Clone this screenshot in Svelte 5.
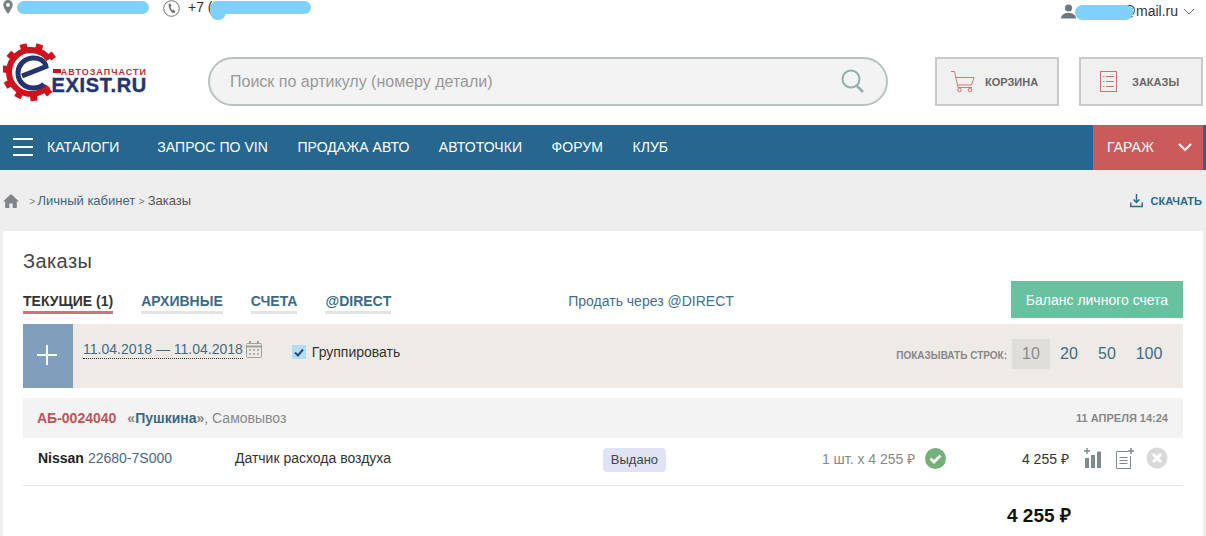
<script>
  const navItems = ['Запрос по VIN', 'Продажа авто', 'Автоточки', 'Форум', 'Клуб'];
  const tabs = ['Архивные', 'Счета', '@Direct'];
  const rowCounts = [20, 50, 100];
  const teeth = [50, 84, 118, 152, 186, 220, 254, 288, 322];
</script>

<div class="page">
  <div class="topbar">
    <div class="contacts">
      <span class="city">
        <svg width="10" height="14" viewBox="0 0 10 14"><path fill="#7b7f82" fill-rule="evenodd" d="M5 0a4.800 4.800 0 0 1 4.800 4.800C9.800 8 5 14 5 14S.2 8 .2 4.800A4.800 4.800 0 0 1 5 0zm0 3a1.900 1.900 0 1 0 0 3.800A1.900 1.900 0 0 0 5 3z"/></svg>
        <span class="blot city-blot"></span>
      </span>
      <span class="phone">
        <svg width="17" height="17" viewBox="0 0 17 17"><circle cx="8.500" cy="8.500" r="7.800" fill="none" stroke="#6d7174" stroke-width="1"/><path fill="#6d7174" d="M5.800 3.800l1.500-.4 1.200 2.500-1 .9c.2 1.300.9 2.600 1.900 3.500l1.200-.5 1.800 2-1.100 1.100c-1.300.5-2.800-.7-4-2.400-1.300-2-2.100-4.700-1.500-6.700z"/></svg>
        <span class="phone-num">+7 (9</span>
        <span class="blot phone-blot"></span>
        <span class="blot phone-drip"></span>
      </span>
    </div>
    <div class="user">
      <svg width="15" height="15" viewBox="0 0 15 15"><circle cx="7.500" cy="4" r="3.600" fill="#6d7880"/><path fill="#6d7880" d="M0 14.500c0-3.500 3-5.500 7.500-5.500s7.500 2 7.500 5.500z"/></svg>
      <span class="mail">post@mail.ru</span>
      <span class="blot user-blot"></span>
      <svg width="12" height="7" viewBox="0 0 12 7"><path d="M1 1l5 5 5-5" fill="none" stroke="#666" stroke-width="1"/></svg>
    </div>
  </div>

  <header class="header">
    <div class="logo">
      <svg class="gear" width="62" height="62" viewBox="0 0 62 62">
        {#each teeth as a}
          <rect x="51" y="26.500" width="6" height="7" fill="#d0121c" transform="rotate({a} 28 30)"/>
        {/each}
        <path d="M46 17.400A22 22 0 1 0 44.900 44.100" fill="none" stroke="#d0121c" stroke-width="6"/>
        <path d="M50 29h8" stroke="#d0121c" stroke-width="4"/>
        <path d="M19 34L43 24.500C42 18 35 15.500 29 16 20 17 15 24 15 31c0 9 7 15 15 15 4 0 8-1 11-4" fill="none" stroke="#24346f" stroke-width="5"/>
      </svg>
      <div class="logo-text">
        <span class="logo-small">автозапчасти</span>
        <span class="logo-big">EXIST.RU</span>
      </div>
    </div>

    <div class="search">
      <span>Поиск по артикулу (номеру детали)</span>
      <svg width="24" height="25" viewBox="0 0 24 25"><circle cx="10" cy="10" r="8.500" fill="none" stroke="#8fb0b0" stroke-width="2"/><path d="M15.500 16.500l6.500 6.500" stroke="#8fb0b0" stroke-width="2.500"/></svg>
    </div>

    <div class="hbtn">
      <svg width="24" height="22" viewBox="0 0 24 22" fill="none" stroke="#cf7b74" stroke-width="1"><path d="M0 .5h3.500L7 16.500h14"/><path d="M4.500 6.500h18.500l-2.500 7.500H7"/><circle cx="8.500" cy="19" r="1.800"/><circle cx="19" cy="19" r="1.800"/></svg>
      <span>Корзина</span>
    </div>
    <div class="hbtn orders">
      <svg width="17" height="21" viewBox="0 0 17 21" fill="none" stroke="#c4766f" stroke-width="1"><rect x=".5" y=".5" width="16" height="20"/><path d="M3 5.500h1.500M6 5.500h8M3 10.500h1.500M6 10.500h8M3 15.500h1.500M6 15.500h8"/></svg>
      <span>Заказы</span>
    </div>
  </header>

  <nav class="nav">
    <div class="catalog">
      <span class="burger"><i></i><i></i><i></i></span>
      <span>Каталоги</span>
    </div>
    <div class="nav-links">
      {#each navItems as item}
        <span>{item}</span>
      {/each}
    </div>
    <div class="garage">
      <span>Гараж</span>
      <svg width="14" height="8" viewBox="0 0 14 8"><path d="M1 1l6 6 6-6" fill="none" stroke="#fff" stroke-width="2"/></svg>
    </div>
  </nav>

  <div class="crumbs">
    <div class="crumb-path">
      <svg width="16" height="14" viewBox="0 0 16 14"><path fill="#7f8589" d="M8 0l8 7.500h-2.200V14H9.700V9.500H6.300V14H2.200V7.500H0z"/></svg>
      <span class="sep first">&gt;</span>
      <span class="crumb-link">Личный кабинет</span>
      <span class="sep">&gt;</span>
      <span class="crumb-here">Заказы</span>
    </div>
    <div class="download">
      <svg width="13" height="14" viewBox="0 0 13 14"><path d="M6.500 0v8M3.500 5.500l3 3 3-3M.8 8.500v4h11.400v-4" fill="none" stroke="#2b6a92" stroke-width="1.500"/></svg>
      <span>Скачать</span>
    </div>
  </div>

  <main class="card">
    <h1>Заказы</h1>

    <div class="tabs-row">
      <div class="tabs">
        <span class="tab active">Текущие (1)</span>
        {#each tabs as tab}
          <span class="tab">{tab}</span>
        {/each}
      </div>
      <span class="sell">Продать через @DIRECT</span>
      <span class="balance">Баланс личного счета</span>
    </div>

    <div class="toolbar">
      <div class="plus"><i></i><i></i></div>
      <div class="dates">
        <span>11.04.2018 — 11.04.2018</span>
        <svg width="16" height="17" viewBox="0 0 16 17" fill="none" stroke="#a3a09b"><rect x=".5" y="2.500" width="15" height="14" rx="1"/><path d="M.5 5.500h15" stroke-width="2"/><path d="M4 0v3M12 0v3" stroke-width="2"/><path d="M3 9h2M7 9h2M11 9h2M3 13h2M7 13h2M11 13h2" stroke-width="1.500"/></svg>
      </div>
      <label class="group">
        <span class="check"><svg width="10" height="9" viewBox="0 0 10 9"><path d="M1 4.500l3 3 5-6" fill="none" stroke="#1e4e7c" stroke-width="2"/></svg></span>
        Группировать
      </label>
      <div class="rows">
        <span class="rows-label">Показывать строк:</span>
        <span class="count current">10</span>
        {#each rowCounts as c}
          <span class="count">{c}</span>
        {/each}
      </div>
    </div>

    <div class="order-head">
      <span class="order-no">АБ-0024040</span>
      <span class="order-place"><b>«<em>Пушкина</em>»</b>, Самовывоз</span>
      <span class="order-date">11 апреля 14:24</span>
    </div>

    <div class="order-row">
      <span class="brand">Nissan</span>
      <span class="part">22680-7S000</span>
      <span class="name">Датчик расхода воздуха</span>
      <span class="status">Выдано</span>
      <span class="qty">1 шт. х 4 255 ₽</span>
      <svg class="ok" width="21" height="21" viewBox="0 0 21 21"><circle cx="10.500" cy="10.500" r="10.500" fill="#74b077"/><path d="M5.500 10.500l3.500 3.500 6.500-6.500" fill="none" stroke="#fff" stroke-width="2.800"/></svg>
      <span class="price">4 255 ₽</span>
      <svg class="act" width="18" height="20" viewBox="0 0 18 20" fill="#7f8a8c"><rect x="1" y="10" width="4" height="10"/><rect x="7" y="7" width="4" height="13"/><rect x="13" y="3.500" width="4" height="16.500"/><path d="M2.300 0h1.400v2.300H6v1.400H3.700V6H2.300V3.700H0V2.300h2.300z"/></svg>
      <svg class="act note" width="18" height="21" viewBox="0 0 18 21" fill="none" stroke="#7f8a8c"><path d="M12 3.500H.5v17h14V8"/><path d="M3.500 9.500h8M3.500 12.500h8M3.500 15.500h8"/><path d="M15 0v6M12 3h6" stroke-width="1.500"/></svg>
      <svg class="act" width="22" height="22" viewBox="0 0 22 22"><circle cx="11" cy="11" r="10.500" fill="#d9d9d9"/><path d="M7 7l8 8M15 7l-8 8" stroke="#fff" stroke-width="3"/></svg>
    </div>

    <div class="total">4 255 ₽</div>
  </main>
</div>

<style>
  :global(body) {
    margin: 0;
    background: #eee;
  }
  .page {
    width: 1206px;
    height: 536px;
    overflow: hidden;
    font-family: "Liberation Sans", Arial, sans-serif;
    color: #333;
    background: #eee;
  }

  /* top strip */
  .topbar {
    height: 22px;
    background: #fff;
    display: flex;
    justify-content: space-between;
    padding: 0 11px 0 3px;
    font-size: 14px;
  }
  .contacts {
    display: flex;
  }
  .city,
  .phone,
  .user {
    position: relative;
    display: flex;
    align-items: flex-start;
  }
  .city {
    width: 160px;
  }
  .phone-num {
    margin: 0 0 0 8px;
    line-height: 15px;
  }
  .blot {
    position: absolute;
    background: #7fd1fc;
    border-radius: 8px;
  }
  .city-blot {
    left: 14px;
    top: 1px;
    width: 132px;
    height: 13px;
  }
  .phone-blot {
    left: 47px;
    top: 1px;
    width: 101px;
    height: 13px;
  }
  .phone-drip {
    left: 47px;
    top: 5px;
    width: 16px;
    height: 15px;
  }
  .user {
    padding-top: 2px;
    height: 18px;
    align-items: center;
    gap: 0;
  }
  .mail {
    margin: 0 5px 0 -15px;
    width: 117px;
    text-align: right;
  }
  .user-blot {
    left: 14px;
    top: 5px;
    width: 58px;
    height: 15px;
  }

  /* logo + search */
  .header {
    height: 103px;
    box-sizing: border-box;
    background: #fff;
    padding: 35px 3px 0;
    display: flex;
    align-items: flex-start;
  }
  .logo {
    width: 205px;
    height: 49px;
    position: relative;
  }
  .gear {
    position: absolute;
    left: 0;
    top: -15px;
  }
  .logo-text {
    position: absolute;
    left: 48px;
    top: 11px;
    width: 96px;
    display: flex;
    flex-direction: column;
    align-items: flex-end;
  }
  .logo-small {
    font-size: 9px;
    line-height: 9px;
    font-weight: bold;
    letter-spacing: 1px;
    text-transform: uppercase;
    color: #c22b35;
  }
  .logo-big {
    font-size: 20px;
    line-height: 16px;
    font-weight: bold;
    letter-spacing: .7px;
    -webkit-text-stroke: .4px #24346f;
    color: #24346f;
  }
  .search {
    width: 680px;
    height: 49px;
    box-sizing: border-box;
    border: 2px solid #b9c2c2;
    border-radius: 25px;
    background: #f3f3f3;
    display: flex;
    align-items: center;
    justify-content: space-between;
    padding: 0 21px 0 20px;
    color: #999;
    font-size: 16px;
  }
  .hbtn {
    width: 124px;
    height: 49px;
    box-sizing: border-box;
    margin-left: 47px;
    border: 2px solid #c9c9c9;
    background: #f0f0f0;
    display: flex;
    align-items: center;
    gap: 10px;
    padding-left: 14px;
    font-size: 11px;
    font-weight: bold;
    text-transform: uppercase;
    color: #666;
  }
  .hbtn.orders {
    margin-left: 20px;
    padding-left: 19px;
    gap: 15px;
  }

  /* main menu */
  .nav {
    height: 45px;
    background: #26668f;
    display: flex;
    align-items: center;
    color: #fff;
    font-size: 14px;
    text-transform: uppercase;
    letter-spacing: .06px;
    padding-right: 3px;
  }
  .catalog {
    display: flex;
    align-items: center;
    padding-left: 13px;
    gap: 14px;
    padding-bottom: 1px;
  }
  .burger {
    display: flex;
    flex-direction: column;
    gap: 6px;
    width: 20px;
  }
  .burger i {
    height: 2px;
    background: #fff;
  }
  .nav-links {
    display: flex;
    gap: 29.500px;
    margin-left: 38px;
    padding-bottom: 1px;
  }
  .garage {
    margin-left: auto;
    width: 110px;
    height: 45px;
    box-sizing: border-box;
    background: #cb5b5b;
    display: flex;
    align-items: center;
    justify-content: space-between;
    padding: 0 11px 1px 14px;
  }

  /* breadcrumbs */
  .crumbs {
    height: 61px;
    display: flex;
    justify-content: space-between;
    align-items: center;
    padding: 0 4px 0 3px;
    font-size: 13px;
  }
  .crumb-path {
    display: flex;
    align-items: center;
  }
  .sep {
    color: #888;
    font-size: 11px;
    margin: 0 3px;
  }
  .sep.first {
    margin: 0 2px 0 10px;
  }
  .crumb-link {
    color: #3f6580;
  }
  .crumb-here {
    color: #555;
  }
  .download {
    display: flex;
    align-items: center;
    gap: 7px;
    font-size: 11px;
    font-weight: bold;
    text-transform: uppercase;
    color: #2b6a92;
  }

  /* card */
  .card {
    margin: 0 3px;
    height: 305px;
    background: #fff;
    border-radius: 3px 3px 0 0;
    padding: 0 20px;
  }
  h1 {
    margin: 0;
    padding-top: 19px;
    font-size: 20px;
    line-height: 22px;
    letter-spacing: .4px;
    font-weight: normal;
    color: #444;
  }
  .tabs-row {
    display: flex;
    align-items: flex-end;
    height: 44px;
    margin-top: 8px;
  }
  .tabs {
    display: flex;
    gap: 28px;
    margin-bottom: 10px;
  }
  .tab {
    font-size: 14px;
    line-height: 18px;
    font-weight: bold;
    text-transform: uppercase;
    color: #3b6a88;
    border-bottom: 3px solid #e3e3e3;
    padding-bottom: 1px;
  }
  .tab.active {
    color: #333;
    border-bottom-color: #d2737a;
  }
  .sell {
    margin-left: 177px;
    font-size: 14px;
    line-height: 20px;
    margin-bottom: 13px;
    color: #3f6f8c;
  }
  .balance {
    margin-left: auto;
    width: 172px;
    height: 37px;
    margin-bottom: 6px;
    background: #68c29f;
    color: #fff;
    font-size: 14px;
    display: flex;
    align-items: center;
    justify-content: center;
  }

  .toolbar {
    height: 64px;
    background: #eeebe7;
    display: flex;
    align-items: flex-start;
  }
  .plus {
    width: 50px;
    height: 64px;
    background: #7f9fbd;
    position: relative;
  }
  .plus i {
    position: absolute;
    background: #fff;
    left: 14px;
    top: 30px;
    width: 20px;
    height: 2px;
  }
  .plus i + i {
    left: 23px;
    top: 21px;
    width: 2px;
    height: 20px;
  }
  .dates {
    display: flex;
    align-items: flex-start;
    gap: 3px;
    margin: 17px 0 0 10px;
    font-size: 14px;
    color: #466a84;
  }
  .dates span {
    border-bottom: 1px dotted #333;
    line-height: 17px;
  }
  .group {
    display: flex;
    align-items: center;
    gap: 6px;
    margin: 20px 0 0 30px;
    font-size: 14px;
    line-height: 16px;
    color: #333;
  }
  .check {
    width: 14px;
    height: 14px;
    background: #b5dcf5;
    display: flex;
    align-items: center;
    justify-content: center;
  }
  .rows {
    margin-left: auto;
    margin-top: 15px;
    padding-right: 11px;
    display: flex;
    align-items: center;
    font-size: 16px;
    color: #3f6a88;
  }
  .rows-label {
    font-size: 10px;
    font-weight: bold;
    text-transform: uppercase;
    color: #888;
    margin: 3px 5px 0 0;
  }
  .count {
    height: 30px;
    min-width: 38px;
    line-height: 29px;
    text-align: center;
  }
  .count:last-child {
    min-width: 46px;
  }
  .count.current {
    background: #e0dedb;
    color: #8a8a8a;
  }

  .order-head {
    margin-top: 10px;
    height: 40px;
    background: #f3f3f3;
    display: flex;
    align-items: center;
    padding: 0 15px 0 14px;
    font-size: 14px;
    color: #888;
  }
  .order-no {
    font-weight: bold;
    color: #c05558;
  }
  .order-place {
    margin-left: 11px;
  }
  .order-place em {
    font-style: normal;
    color: #3b6a88;
  }
  .order-date {
    margin-left: auto;
    font-size: 11px;
    font-weight: bold;
    text-transform: uppercase;
    color: #888;
  }

  .order-row {
    height: 48px;
    box-sizing: border-box;
    border-bottom: 1px solid #e6e6e6;
    display: flex;
    align-items: center;
    padding: 0 0 7px 15px;
    font-size: 14px;
  }
  .brand {
    font-weight: bold;
    color: #222;
  }
  .part {
    margin-left: 4px;
    width: 147px;
    color: #466a84;
  }
  .name {
    width: 368px;
    color: #333;
  }
  .status {
    width: 63px;
    height: 24px;
    margin-top: 3px;
    background: #e0e3f5;
    border-radius: 4px;
    font-size: 13px;
    color: #444;
    text-align: center;
    line-height: 24px;
  }
  .qty {
    margin-left: 156px;
    width: 103px;
    color: #888;
    white-space: nowrap;
  }
  .ok {
    flex: none;
  }
  .price {
    margin-left: 76px;
    width: 51px;
    white-space: nowrap;
    color: #333;
  }
  .act {
    flex: none;
    margin-left: 11px;
  }
  .act.note {
    margin-left: 14px;
    margin-right: 1px;
  }
  .total {
    margin-top: 16px;
    padding-left: 984px;
    font-size: 19px;
    font-weight: bold;
    color: #111;
    white-space: nowrap;
  }
</style>
